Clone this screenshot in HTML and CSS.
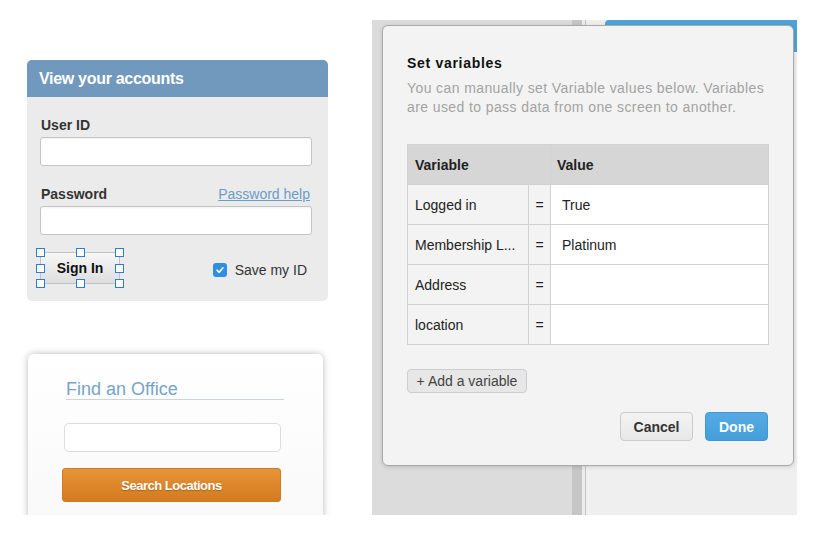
FILE: index.html
```html
<!DOCTYPE html>
<html lang="en">
<head>
    <meta charset="UTF-8">
    <meta name="viewport" content="width=device-width, initial-scale=1.0">
    <title>Set variables</title>
    <link rel="stylesheet" href="styles.css">
</head>
<body>
    <div class="page">
        <div class="forms">
            <section class="login">
                <h2 class="login-title">View your accounts</h2>
                <div class="login-body">
                    <label class="field-label">User ID</label>
                    <input type="text" class="text-input">
                    <div class="label-row">
                        <label class="field-label">Password</label>
                        <a href="#" class="help-link">Password help</a>
                    </div>
                    <input type="password" class="text-input">
                    <div class="login-actions">
                        <div class="selected">
                            <button class="signin">Sign In</button>
                            <span class="handle tl"></span>
                            <span class="handle tc"></span>
                            <span class="handle tr"></span>
                            <span class="handle ml"></span>
                            <span class="handle mr"></span>
                            <span class="handle bl"></span>
                            <span class="handle bc"></span>
                            <span class="handle br"></span>
                        </div>
                        <label class="save-id">
                            <span class="checkbox">
                                <svg width="10" height="10" viewBox="0 0 10 10"><path d="M2 5.2 L4.2 7.3 L8 2.8" fill="none" stroke="#fff" stroke-width="1.6" stroke-linecap="round" stroke-linejoin="round"/></svg>
                            </span>
                            Save my ID
                        </label>
                    </div>
                </div>
            </section>

            <section class="office">
                <h2 class="office-title">Find an Office</h2>
                <input type="text" class="office-input">
                <button class="search-btn">Search Locations</button>
            </section>
        </div>

        <div class="workspace">
            <div class="pane-left"></div>
            <div class="divider"></div>
            <div class="pane-right">
                <div class="topbar"></div>
            </div>

            <div class="modal">
                <h3 class="modal-title">Set variables</h3>
                <p class="modal-desc">You can manually set Variable values below. Variables are used to pass data from one screen to another.</p>

                <table class="vars">
                    <colgroup>
                        <col class="col-name">
                        <col class="col-eq">
                        <col class="col-value">
                    </colgroup>
                    <thead>
                        <tr>
                            <th colspan="2">Variable</th>
                            <th class="th-value">Value</th>
                        </tr>
                    </thead>
                    <tbody>
                        <tr><td class="name">Logged in</td><td class="eq">=</td><td class="value">True</td></tr>
                        <tr><td class="name">Membership L...</td><td class="eq">=</td><td class="value">Platinum</td></tr>
                        <tr><td class="name">Address</td><td class="eq">=</td><td class="value"></td></tr>
                        <tr><td class="name">location</td><td class="eq">=</td><td class="value"></td></tr>
                    </tbody>
                </table>

                <button class="add-btn">+ Add a variable</button>

                <div class="modal-actions">
                    <button class="btn-cancel">Cancel</button>
                    <button class="btn-done">Done</button>
                </div>
            </div>
        </div>
    </div>
</body>
</html>
```

FILE: styles.css
```css
* {
    box-sizing: border-box;
}

body {
    margin: 0;
    background-color: #fff;
    font-family: "Liberation Sans", Arial, sans-serif;
    color: #333;
}

.page {
    display: flex;
    height: 515px;
    overflow: hidden;
}

/* left column: the two form widgets */

.forms {
    width: 372px;
    flex-shrink: 0;
}

.login {
    width: 301px;
    margin: 60px 0 0 27px;
    border-radius: 5px;
    background-color: #ebebeb;
    overflow: hidden;
}

.login-title {
    margin: 0;
    height: 37px;
    padding-left: 12px;
    background-color: #7199be;
    color: #fff;
    font-size: 16px;
    line-height: 37px;
    letter-spacing: -0.3px;
}

.login-body {
    padding: 19px 16px 17px 13px;
}

.field-label {
    display: block;
    height: 18px;
    margin: 0 0 3px 1px;
    font-size: 14px;
    font-weight: bold;
    line-height: 18px;
    color: #333;
}

.label-row {
    display: flex;
    justify-content: space-between;
    align-items: center;
    margin-top: 19px;
    padding-right: 2px;
}

.help-link {
    margin-bottom: 3px;
    font-size: 14px;
    color: #6c9cc7;
}

.text-input {
    display: block;
    width: 272px;
    height: 29px;
    border: 1px solid #c4c4c4;
    border-radius: 3px;
    background-color: #fff;
    box-shadow: inset 0 1px 2px rgba(0, 0, 0, 0.05);
}

.login-actions {
    display: flex;
    justify-content: space-between;
    align-items: center;
    margin-top: 17px;
    padding-right: 5px;
}

.selected {
    position: relative;
}

.signin {
    display: block;
    width: 80px;
    height: 32px;
    border: 1px solid #c2c2c2;
    border-radius: 3px;
    background: linear-gradient(#f7f7f7, #dedede);
    font-family: inherit;
    font-size: 14px;
    font-weight: bold;
    color: #111;
}

.handle {
    position: absolute;
    width: 9px;
    height: 9px;
    border: 1.5px solid #2b80d6;
    background-color: #fff;
}

.tl, .tc, .tr { top: -4px; }
.ml, .mr { top: 12px; }
.bl, .bc, .br { bottom: -4px; }
.tl, .ml, .bl { left: -4px; }
.tc, .bc { left: 36px; }
.tr, .mr, .br { right: -4px; }

.save-id {
    display: flex;
    align-items: center;
    gap: 8px;
    margin-top: 4px;
    font-size: 14px;
    color: #333;
}

.checkbox {
    display: flex;
    align-items: center;
    justify-content: center;
    width: 14px;
    height: 14px;
    margin-left: -1px;
    border-radius: 3px;
    background-color: #2f8fe3;
}

.office {
    width: 295px;
    height: 240px;
    margin: 53px 0 0 28px;
    padding: 24px 0 0 34px;
    border-radius: 6px;
    background: linear-gradient(#fff, #f6f6f6);
    box-shadow: 0 0 7px rgba(0, 0, 0, 0.28);
}

.office-title {
    width: 218px;
    margin: 0 0 0 4px;
    height: 22px;
    border-bottom: 1px solid #cbd5dc;
    font-size: 18px;
    font-weight: normal;
    line-height: 22px;
    color: #77a4c8;
}

.office-input {
    display: block;
    width: 217px;
    height: 29px;
    margin: 23px 0 0 2px;
    border: 1px solid #dcdcdc;
    border-radius: 5px;
    background-color: #fff;
}

.search-btn {
    display: block;
    width: 219px;
    height: 34px;
    margin-top: 16px;
    border: 1px solid #cf7b22;
    border-radius: 3px;
    background: linear-gradient(#e6943a, #dc8427 60%, #d27b22);
    font-family: inherit;
    font-size: 13px;
    font-weight: bold;
    letter-spacing: -0.5px;
    color: #fff;
    text-shadow: 0 1px 1px rgba(0, 0, 0, 0.25);
}

/* right side: the editor canvas with the dialog */

.workspace {
    position: relative;
    display: flex;
    width: 425px;
    height: 495px;
    margin-top: 20px;
}

.pane-left {
    width: 200px;
    background-color: #dcdcdc;
}

.divider {
    width: 14px;
    border-left: 10px solid #c6c6c6;
    border-right: 1px solid #c4c4c4;
    background-color: #ededed;
}

.pane-right {
    flex: 1;
    padding-left: 19px;
    background-color: #efefef;
}

.topbar {
    height: 32px;
    border-top-left-radius: 4px;
    background-color: #4ea3d6;
}

.modal {
    position: absolute;
    top: 5px;
    left: 10px;
    width: 412px;
    height: 441px;
    padding: 28px 24px 0 24px;
    border: 1px solid #a9a9a9;
    border-radius: 6px;
    background-color: #f3f3f3;
    box-shadow: 0 1px 4px rgba(0, 0, 0, 0.15);
}

.modal-title {
    margin: 0;
    font-size: 14px;
    line-height: 18px;
    letter-spacing: 0.7px;
    color: #111;
}

.modal-desc {
    margin: 7px 0 0;
    font-size: 14px;
    line-height: 19px;
    letter-spacing: 0.4px;
    color: #a3a3a3;
}

.vars {
    width: 362px;
    margin-top: 27px;
    border-collapse: collapse;
    table-layout: fixed;
    font-size: 14px;
}

.col-name { width: 121px; }
.col-eq { width: 22px; }

.vars th {
    height: 40px;
    padding: 0 7px;
    border: 1px solid #d2d2d2;
    background-color: #d6d6d6;
    text-align: left;
    color: #222;
}

.vars th.th-value {
    padding-left: 6px;
}

.vars td {
    height: 40px;
    border: 1px solid #d2d2d2;
    color: #222;
}

.vars .name {
    padding: 0 7px;
    white-space: nowrap;
    overflow: hidden;
    background-color: #f3f3f3;
}

.vars .eq {
    text-align: center;
    background-color: #f3f3f3;
}

.vars .value {
    padding: 0 11px;
    background-color: #fff;
}

.add-btn {
    display: block;
    width: 120px;
    height: 24px;
    margin-top: 24px;
    padding: 0;
    border: 1px solid #cdcdcd;
    border-radius: 4px;
    background-color: #e7e7e7;
    font-family: inherit;
    font-size: 14px;
    color: #444;
}

.modal-actions {
    display: flex;
    justify-content: flex-end;
    gap: 12px;
    margin-top: 19px;
    padding-right: 1px;
}

.btn-cancel,
.btn-done {
    height: 29px;
    border-radius: 4px;
    font-family: inherit;
    font-size: 14px;
    font-weight: bold;
}

.btn-cancel {
    width: 73px;
    border: 1px solid #cbcbcb;
    background: linear-gradient(#f3f3f3, #e8e8e8);
    color: #333;
}

.btn-done {
    width: 63px;
    border: 1px solid #3e98d4;
    background: linear-gradient(#56aae2, #459fdb);
    color: #fff;
}
```
